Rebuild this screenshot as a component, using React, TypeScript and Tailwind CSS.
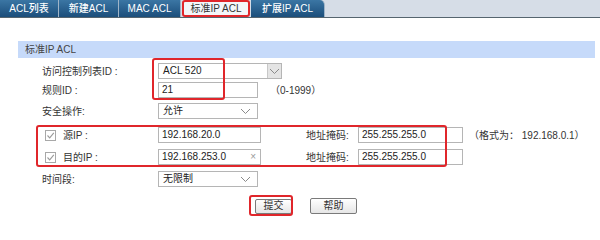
import React from "react"

const tabs = ["ACL列表", "新建ACL", "MAC ACL", "标准IP ACL", "扩展IP ACL"]
const tabWidths = ["w-[59px]", "w-[60px]", "w-[62px]", "w-[68px]", "w-[74px]"]

function Chevron() {
  return (
    <svg width="11" height="7" viewBox="0 0 11 7" className="shrink-0">
      <path d="M1 1 L5.5 5.5 L10 1" fill="none" stroke="#8a8a8a" strokeWidth="1" />
    </svg>
  )
}

function Select({ value, w, boxed }: { value: string; w: string; boxed?: boolean }) {
  return (
    <div className={`${w} h-[16px] border border-[#b5b5b5] bg-white flex items-center justify-between pl-[4px]`}>
      <span className="text-[10px] leading-none text-[#222]">{value}</span>
      {boxed ? (
        <div className="h-full w-[14px] bg-[#e4e4e4] border-l border-[#c8c8c8] flex items-center justify-center">
          <Chevron />
        </div>
      ) : (
        <div className="pr-[6px] flex items-center">
          <Chevron />
        </div>
      )}
    </div>
  )
}

function Input({ value, w, clear }: { value: string; w: string; clear?: boolean }) {
  return (
    <div className={`${w} h-[16px] border border-[#b5b5b5] bg-white flex items-center justify-between pl-[3px] pr-[4px]`}>
      <span className="text-[10px] leading-none text-[#222]">{value}</span>
      {clear && <span className="text-[10px] leading-none text-[#999]">×</span>}
    </div>
  )
}

function Check() {
  return (
    <div className="w-[11px] h-[11px] border border-[#a8a8a8] bg-white flex items-center justify-center">
      <svg width="9" height="9" viewBox="0 0 9 9">
        <path d="M1.5 4.5 L3.7 6.8 L7.8 1.8" fill="none" stroke="#9a9a9a" strokeWidth="1.1" />
      </svg>
    </div>
  )
}

export default function App() {
  return (
    <div
      className="relative w-[600px] h-[229px] bg-white overflow-hidden text-[#333]"
      style={{ fontFamily: '"Liberation Sans", "Noto Sans CJK SC", sans-serif' }}
    >
      {/* 页签 */}
      <div className="h-[18px] bg-[#d6dde7] border-b border-[#56656f] flex items-end">
        {tabs.map((t, i) =>
          i === 3 ? (
            <div
              key={t}
              className={`${tabWidths[i]} h-[17px] mx-[1px] bg-[#f3f6f9] border-2 border-[#e0262b] rounded-[3px] flex items-center justify-center text-[10px] text-[#333]`}
            >
              {t}
            </div>
          ) : (
            <div
              key={t}
              className={`${tabWidths[i]} h-[17px] bg-gradient-to-b from-[#3b76a4] to-[#1b4e7b] border-r border-[#9fb4c8] flex items-center justify-center text-[10px] font-medium text-white ${
                i === 4 ? "rounded-tr-[5px]" : ""
              }`}
            >
              {t}
            </div>
          )
        )}
      </div>

      {/* 标题 */}
      <div className="mt-[23px] ml-[18px] w-[577px] h-[17px] bg-[#c6dafa] flex items-center pl-[7px] text-[10px] text-[#444]">
        标准IP ACL
      </div>

      <div className="pl-[42px] text-[10px] whitespace-nowrap">
        <div className="mt-[5px] h-[16px] flex items-center">
          <span className="w-[116px]">访问控制列表ID :</span>
          <Select value="ACL 520" w="w-[124px]" boxed />
        </div>
        <div className="mt-[3px] h-[16px] flex items-center">
          <span className="w-[116px]">规则ID :</span>
          <Input value="21" w="w-[100px]" />
          <span className="ml-[12px]">（0-1999）</span>
        </div>
        <div className="mt-[5px] h-[16px] flex items-center">
          <span className="w-[116px]">安全操作:</span>
          <Select value="允许" w="w-[100px]" />
        </div>
        <div className="mt-[8px] h-[16px] flex items-center">
          <div className="w-[116px] flex items-center">
            <div className="ml-[3px] mr-[7px]">
              <Check />
            </div>
            <span>源IP :</span>
          </div>
          <Input value="192.168.20.0" w="w-[103px]" />
          <span className="ml-[45px] w-[52px]">地址掩码:</span>
          <Input value="255.255.255.0" w="w-[105px]" />
          <span className="ml-[6px]">（格式为： 192.168.0.1）</span>
        </div>
        <div className="mt-[6px] h-[16px] flex items-center">
          <div className="w-[116px] flex items-center">
            <div className="ml-[3px] mr-[7px]">
              <Check />
            </div>
            <span>目的IP :</span>
          </div>
          <Input value="192.168.253.0" w="w-[103px]" clear />
          <span className="ml-[45px] w-[52px]">地址掩码:</span>
          <Input value="255.255.255.0" w="w-[105px]" />
        </div>
        <div className="mt-[6px] h-[16px] flex items-center">
          <span className="w-[116px]">时间段:</span>
          <Select value="无限制" w="w-[100px]" />
        </div>
        <div className="mt-[11px] flex items-center">
          <button className="ml-[213px] w-[37px] h-[15px] border border-[#7a7a7a] rounded-[2px] bg-gradient-to-b from-white to-[#e6e6e6] text-[10px] leading-none">
            提交
          </button>
          <button className="ml-[18px] w-[47px] h-[16px] border border-[#7a7a7a] rounded-[2px] bg-gradient-to-b from-white to-[#e6e6e6] text-[10px] leading-none">
            帮助
          </button>
        </div>
      </div>

      {/* 红色标注框 */}
      <div className="absolute left-[152px] top-[58px] w-[73px] h-[42px] border-2 border-[#e0262b] rounded-[3px]" />
      <div className="absolute left-[36px] top-[125px] w-[411px] h-[42px] border-2 border-[#e0262b] rounded-[3px]" />
      <div className="absolute left-[249px] top-[195px] w-[44px] h-[21px] border-2 border-[#e0262b] rounded-[3px]" />
    </div>
  )
}
